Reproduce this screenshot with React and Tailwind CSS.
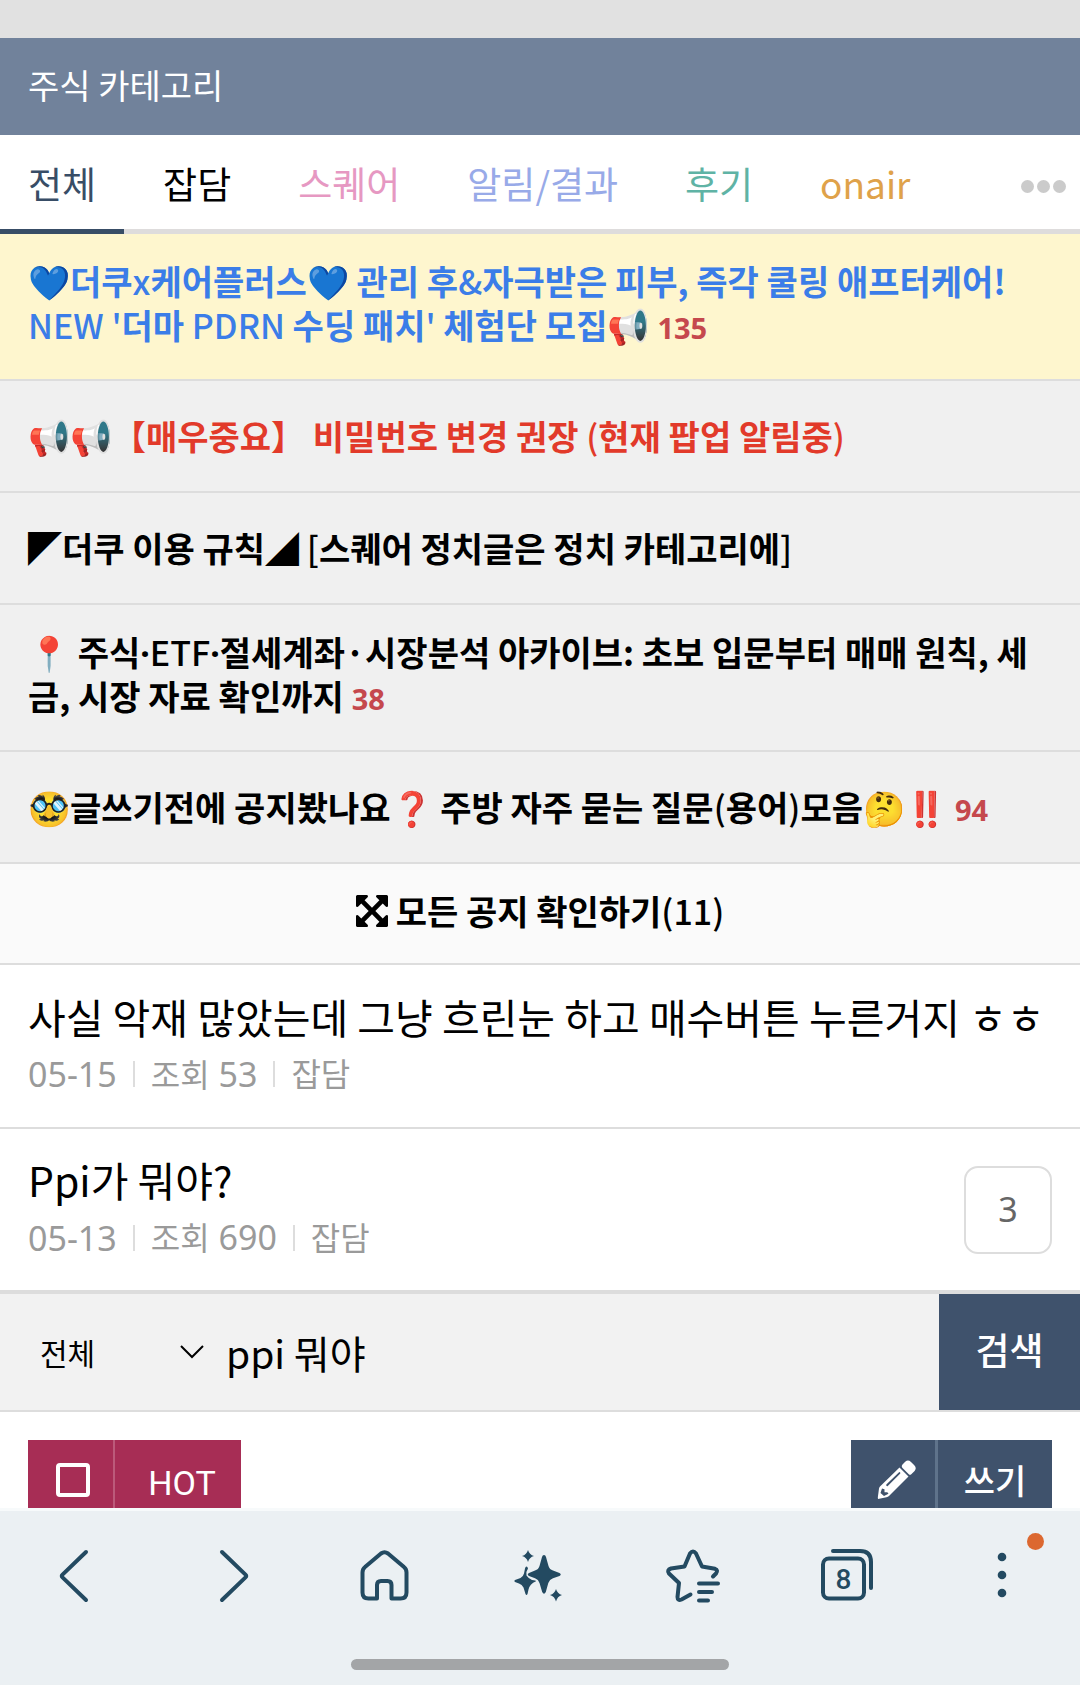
const KR = "font-['Noto_Sans_CJK_KR',sans-serif]";
const NOTO = "font-['Noto_Sans','Noto_Sans_CJK_KR',sans-serif]";

const tabs = [
  { label: "전체", color: "text-[#384d66]", active: true },
  { label: "잡담", color: "text-black" },
  { label: "스퀘어", color: "text-[#e698c2]" },
  { label: "알림/결과", color: "text-[#98aae8]" },
  { label: "후기", color: "text-[#5fb3a5]" },
  { label: "onair", color: "text-[#dfa24a]" },
];

const posts = [
  { title: "사실 악재 많았는데 그냥 흐린눈 하고 매수버튼 누른거지 ㅎㅎ", date: "05-15", views: "53", category: "잡담" },
  { title: "Ppi가 뭐야?", date: "05-13", views: "690", category: "잡담", comments: "3" },
];

function Notice({ className, count, multiline, children }) {
  return (
    <li className="border-b-2 border-[#dddddd]">
      <a
        href="#notice"
        className={`flex min-h-[110px] items-center px-7 text-[34px] leading-[44px] font-bold ${
          multiline ? "pt-[25px] pb-8" : "py-7"
        } ${className}`}
      >
        <span>
          {children}
          {count && <span className={`ml-2 text-[29px] leading-none text-[#c5484d] ${NOTO}`}>{count}</span>}
        </span>
      </a>
    </li>
  );
}

function Separator() {
  return <span className="h-[26px] w-[2px] bg-[#dddddd]" />;
}

function Post({ title, date, views, category, comments }) {
  return (
    <li className="flex min-h-[164px] items-center justify-between gap-7 border-b-2 border-[#dddddd] px-7 last:min-h-[165px] last:border-b-4">
      <a href="#post" className="flex min-w-0 flex-1 flex-col gap-1 pb-1">
        <span className="text-[41px] leading-[56px] text-black">{title}</span>
        <span className={`flex items-center gap-4 text-[34px] leading-[52px] text-[#9a9a9a] ${NOTO}`}>
          <span>{date}</span>
          <Separator />
          <span>
            <span className="text-[32px]">조회</span> {views}
          </span>
          <Separator />
          <span className="text-[32px]">{category}</span>
        </span>
      </a>
      {comments && (
        <a
          href="#comments"
          className={`flex size-[88px] shrink-0 items-center justify-center rounded-[14px] border-2 border-[#dddddd] text-[34px] text-[#666666] ${NOTO}`}
        >
          {comments}
        </a>
      )}
    </li>
  );
}

function ArrowsIcon() {
  return (
    <svg viewBox="0 -128 1536 1536" className="size-8" fill="currentColor" aria-hidden="true">
      <path d="M1283 995l-355-355 355-355 144 144q29 31 70 14 39-17 39-59v-448q0-26-19-45t-45-19h-448q-42 0-59 40-17 39 14 69l144 144-355 355-355-355 144-144q31-30 14-69-17-40-59-40h-448q-26 0-45 19t-19 45v448q0 42 40 59 39 17 69-14l144-144 355 355-355 355-144-144q-19-19-45-19-12 0-24 5-40 17-40 59v448q0 26 19 45t45 19h448q42 0 59-40 17-39-14-69l-144-144 355-355 355 355-144 144q-31 30-14 69 17 40 59 40h448q26 0 45-19t19-45v-448q0-42-39-59-13-5-25-5-26 0-45 19z" />
    </svg>
  );
}

function PencilIcon() {
  return (
    <svg viewBox="0 0 40 40" className="size-10" fill="currentColor" aria-hidden="true">
      <path d="M25.500 4.500L28.200 1.800Q31 -0.800 34 2L37.300 5.300Q40 8 37.600 11L34.300 14.200Q33 15.300 31.800 14.200L25.500 8Q24 6.300 25.500 4.500Z" />
      <path
        fillRule="evenodd"
        d="M22.500 7.500L31.500 16.500L12 36Q11 37 9.500 37.300L1 39L0.800 37.500L2 28.500Q2.200 27.300 3 26.500ZM22.300 12L9.300 24.500Q8.800 26.500 10.500 26.300L23.300 13.500Q23.700 12 22.300 12ZM5 28.500L3.500 33L7 36L11.500 33.800L10.300 32.300H7.500V29.300Z"
      />
    </svg>
  );
}

function NavIcon({ children }) {
  return (
    <svg
      viewBox="0 0 60 60"
      className="size-[60px]"
      fill="none"
      stroke="currentColor"
      strokeWidth="4"
      strokeLinecap="round"
      strokeLinejoin="round"
      aria-hidden="true"
    >
      {children}
    </svg>
  );
}

const navItems = [
  {
    label: "뒤로",
    icon: <path d="M39 6L15.500 28.600Q14 30 15.500 31.400L39 54" />,
  },
  {
    label: "앞으로",
    icon: <path d="M21 6L44.500 28.600Q46 30 44.500 31.400L21 54" />,
  },
  {
    label: "홈",
    icon: <path d="M26 7.500L10 21Q7.500 23 7.500 26.500V46.500Q7.500 52.500 13.500 52.500H22V39Q22 35 26 35H32.500Q36.500 35 36.500 39V52.500H45.500Q51.500 52.500 51.500 46.500V26.500Q51.500 23 49 21L33 7.500Q29.500 5 26 7.500Z" />,
  },
  {
    label: "AI",
    icon: (
      <g fill="currentColor" stroke="none">
        <path d="M19 4Q20.300 8.700 25 10Q20.300 11.300 19 16Q17.700 11.300 13 10Q17.700 8.700 19 4Z" />
        <path d="M17.500 20.500Q18.500 20.500 19 22.500Q16.500 26 17.500 29.500Q19.500 32.500 23 34Q27 34.500 27 35.200Q20.500 38 19.500 43.500L18.500 48Q17.500 50 16.500 48L14.500 41.500Q13 38.500 10 37.500L6 36Q4.500 35 6 34L11.500 32Q14 31 15 27.500L16 22.500Q16.500 20.500 17.500 20.500Z" />
        <path d="M35 9Q36.500 9 37 11L39.500 20Q40.500 23.500 44 24.500L50.500 27Q53 28.500 50.500 30L44 32.200Q40.500 33.500 39.300 37L36.800 46Q35 49.500 33.200 46L30.500 37Q29.500 33.500 26 32.200L20 30Q17.500 28.500 20 27L26 24.500Q29.500 23.500 30.500 20L33 11Q33.500 9 35 9Z" />
        <path d="M47 43Q48.300 47.700 53 49Q48.300 50.300 47 55.500Q45.700 50.300 41 49Q45.700 47.700 47 43Z" />
      </g>
    ),
  },
  {
    label: "북마크",
    icon: (
      <>
        <path d="M50 30.500L53 27.500Q55.500 24 52 22.800L39 20.500L33 7.500Q30 3.500 27 7.500L21.500 20.500L8 22.500Q3.500 24 6 27.500L16 37L14.500 51Q14.500 55 18.500 53.500L27.500 48.500" />
        <path d="M36 37.500H55M36 46H49M36 54.500H45" />
      </>
    ),
  },
  {
    label: "탭 8개",
    icon: (
      <>
        <rect x="6" y="12.500" width="41" height="40" rx="6" />
        <path d="M16 5H43Q54 5 54 16V42" />
      </>
    ),
    badge: "8",
  },
  {
    label: "메뉴",
    icon: (
      <g fill="currentColor" stroke="none">
        <circle cx="31" cy="11" r="4.300" />
        <circle cx="31" cy="29" r="4.300" />
        <circle cx="31" cy="47" r="4.300" />
      </g>
    ),
    dot: true,
  },
];

export default function App() {
  return (
    <div className={`flex h-screen flex-col overflow-hidden bg-white ${KR}`}>
      <div className="h-[38px] shrink-0 bg-[#e1e1e1]" />

      <main className="min-h-0 flex-1 overflow-hidden">
        <header className="flex h-[97px] items-center bg-[#71829b] px-7 pb-1">
          <h1 className="text-[34px] leading-[44px] font-normal text-white">주식 카테고리</h1>
        </header>

        <nav className="flex h-[99px] justify-between border-b-[5px] border-[#dedcdc]">
          <div className="flex gap-[11px]">
            {tabs.map((tab) => (
              <a
                key={tab.label}
                href="#tab"
                className={`-mb-[5px] flex items-center px-7 pt-[2px] text-[37px] leading-[48px] ${tab.color} ${
                  tab.active ? "border-b-[5px] border-[#384d66]" : "border-b-[5px] border-transparent"
                }`}
              >
                {tab.label}
              </a>
            ))}
          </div>
          <button type="button" aria-label="더보기" className="flex items-center gap-[3px] pt-2 pr-[14px]">
            <span className="size-[13px] rounded-full bg-[#cbcbcb]" />
            <span className="size-[13px] rounded-full bg-[#cbcbcb]" />
            <span className="size-[13px] rounded-full bg-[#cbcbcb]" />
          </button>
        </nav>

        <ul>
          <Notice className="bg-[#fef6ce] text-[#3b7de8]" count="135" multiline>
            💙더쿠<span className="font-medium">x</span>케어플러스💙 관리 후<span className="font-medium">&amp;</span>자극받은 피부, 즉각 쿨링 애프터케어!{" "}
            <span className="font-medium">NEW '</span>더마 <span className="font-medium">PDRN</span> 수딩 패치
            <span className="font-medium">'</span> 체험단 모집📢
          </Notice>
          <Notice className="bg-[#f0f0f0] text-[#e23a2a]">
            📢📢【매우중요】 비밀번호 변경 권장 <span className="font-medium">(</span>현재 팝업 알림중
            <span className="font-medium">)</span>
          </Notice>
          <Notice className="bg-[#f0f0f0] text-black">
            ◤더쿠 이용 규칙◢ <span className="font-medium">[</span>스퀘어 정치글은 정치 카테고리에
            <span className="font-medium">]</span>
          </Notice>
          <Notice className="bg-[#f0f0f0] text-black" count="38" multiline>
            📍 주식<span className={`leading-none ${NOTO}`}>·</span>
            <span className="font-medium">ETF</span>
            <span className={`leading-none ${NOTO}`}>·</span>절세계좌·시장분석 아카이브: 초보 입문부터 매매 원칙, 세금, 시장 자료 확인까지
          </Notice>
          <Notice className="bg-[#f0f0f0] text-black" count="94">
            🥸글쓰기전에 공지봤나요❓ 주방 자주 묻는 질문<span className="font-medium">(</span>용어
            <span className="font-medium">)</span>모음🤔‼️
          </Notice>
        </ul>

        <button
          type="button"
          className="flex h-[101px] w-full items-center justify-center gap-2 border-b-2 border-[#dddddd] bg-[#fafafa] pb-[6px] text-[34px] leading-[44px] font-bold text-black"
        >
          <ArrowsIcon />
          <span>
            모든 공지 확인하기<span className="font-medium">(11)</span>
          </span>
        </button>

        <ul>
          {posts.map((post) => (
            <Post key={post.title} {...post} />
          ))}
        </ul>

        <form className="flex h-[118px] border-b-2 border-[#dddddd] bg-[#f2f2f2]">
          <div className="flex items-center">
            <select
              aria-label="검색 대상"
              defaultValue="all"
              className="h-full w-[180px] appearance-none bg-transparent pl-10 text-[30px] text-black"
            >
              <option value="all">전체</option>
              <option value="title">제목</option>
            </select>
            <svg viewBox="0 0 24 14" className="pointer-events-none h-[14px] w-6" fill="none" stroke="black" strokeWidth="2" aria-hidden="true">
              <path d="M1 1L12 12L23 1" />
            </svg>
          </div>
          <input
            type="text"
            aria-label="검색어"
            defaultValue="ppi 뭐야"
            className="min-w-0 flex-1 bg-transparent pl-[22px] text-[39px] text-black outline-none"
          />
          <button type="button" className="w-[141px] bg-[#3f526c] pb-1 text-[37px] font-medium text-white">
            검색
          </button>
        </form>

        <div className="flex justify-between px-7 pt-7">
          <label className="flex h-[84px] bg-[#a72d55] text-white">
            <span className="flex w-[87px] items-center justify-center border-r-2 border-[#bc5a7a] pb-1 pl-1">
              <input
                type="checkbox"
                className="size-[34px] appearance-none rounded-[4px] border-4 border-white"
              />
            </span>
            <span className="flex w-[126px] items-center justify-center pt-[2px] pl-2 font-['Roboto',sans-serif] text-[34px]">
              HOT
            </span>
          </label>
          <button type="button" className="flex h-[84px] bg-[#3f526c] text-white">
            <span className="flex h-full w-[87px] items-center justify-center border-r-[3px] border-[#5f738b] pb-1 pl-2">
              <PencilIcon />
            </span>
            <span className="flex h-full w-[114px] items-center justify-center pb-[6px] text-[34px] font-medium">쓰기</span>
          </button>
        </div>
      </main>

      <nav className="flex h-[177px] shrink-0 flex-col justify-between border-t-[3px] border-[#f7fafb] bg-[#ebf0f3] pt-[35px] pb-[15px] text-[#234a61]">
        <div className="grid grid-cols-7 pr-[2px]">
          {navItems.map((item) => (
            <button key={item.label} type="button" aria-label={item.label} className="flex justify-center">
              <span className="relative flex">
                <NavIcon>{item.icon}</NavIcon>
                {item.badge && (
                  <span className="absolute top-[13px] left-[6px] w-[41px] text-center font-['Roboto',sans-serif] text-[28px] leading-[41px] font-medium">
                    {item.badge}
                  </span>
                )}
                {item.dot && (
                  <span className="absolute -top-[13px] -right-[13px] size-[17px] rounded-full bg-[#dc6830]" />
                )}
              </span>
            </button>
          ))}
        </div>
        <div className="h-[11px] w-[378px] self-center rounded-full bg-[#a3a5a7]" />
      </nav>
    </div>
  );
}
